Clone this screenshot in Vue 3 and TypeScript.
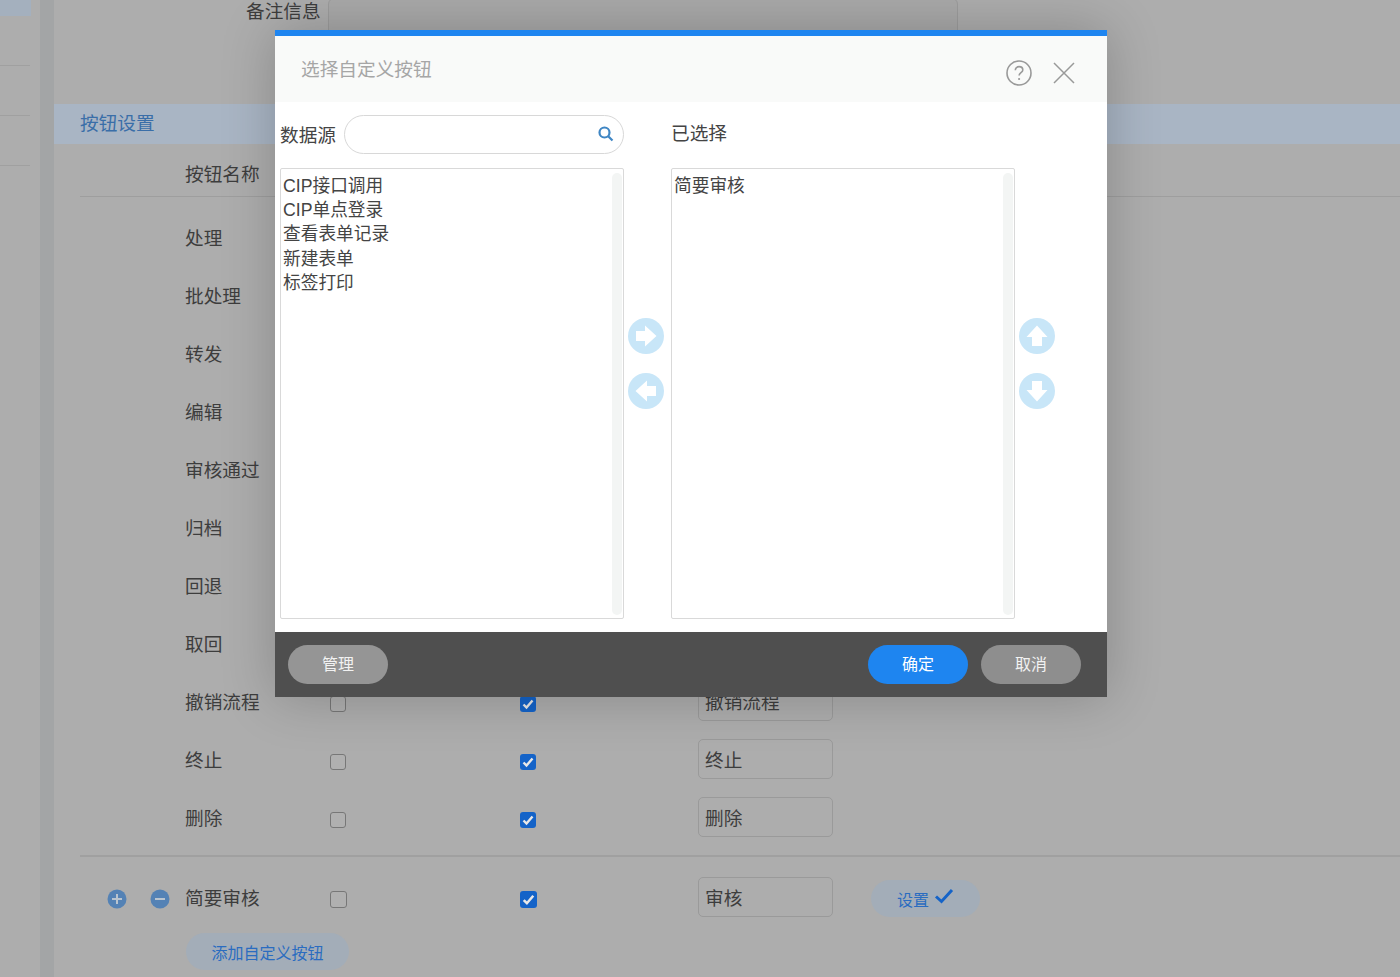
<template>
  <div class="page">
    <aside class="side">
      <div class="side-active"></div>
      <div class="side-item"></div>
      <div class="side-item"></div>
      <div class="side-item"></div>
    </aside>
    <div class="gutter"></div>

    <main class="main">
      <div class="remark">
        <label>备注信息</label>
        <div class="remark-input"></div>
      </div>

      <div class="section-bar">按钮设置</div>

      <div class="table">
        <div class="row head">
          <span></span>
          <span>按钮名称</span>
        </div>
        <div v-for="item in buttons" :key="item" class="row">
          <span></span>
          <span>{{ item }}</span>
          <span class="cb"></span>
          <span class="cb on"><svg viewBox="0 0 16 16"><path d="M3.5 8.500l3 3 6-7" /></svg></span>
          <span class="text-input">{{ item }}</span>
        </div>

        <div class="row custom">
          <span class="ops">
            <svg class="op" viewBox="0 0 20 20"><circle cx="10" cy="10" r="9.500" /><path d="M5 10h10M10 5v10" /></svg>
            <svg class="op" viewBox="0 0 20 20"><circle cx="10" cy="10" r="9.500" /><path d="M5 10h10" /></svg>
          </span>
          <span>简要审核</span>
          <span class="cb"></span>
          <span class="cb on"><svg viewBox="0 0 16 16"><path d="M3.5 8.500l3 3 6-7" /></svg></span>
          <span class="text-input">审核</span>
          <button class="pill setting">
            设置
            <svg class="tick" viewBox="0 0 20 16"><path d="M2 8.500l5.500 5L18 2" /></svg>
          </button>
        </div>
        <button class="pill add">添加自定义按钮</button>
      </div>
    </main>

    <div class="dialog">
      <header class="dialog-head">
        <span class="dialog-title">选择自定义按钮</span>
        <svg class="help" viewBox="0 0 26 26">
          <circle cx="13" cy="13" r="12" />
          <path d="M9.300 10.200c0-2.200 1.700-3.600 3.800-3.600s3.700 1.400 3.700 3.300c0 2.700-3.700 2.900-3.700 5.600" />
          <circle class="dot" cx="13.100" cy="19" r="1.100" />
        </svg>
        <svg class="close" viewBox="0 0 22 22"><path d="M1 1l20 20M21 1L1 21" /></svg>
      </header>

      <div class="dialog-body">
        <div class="search-row">
          <label>数据源</label>
          <div class="search">
            <svg viewBox="0 0 16 16"><circle cx="6.500" cy="6.500" r="5" /><path d="M10.200 10.200l4.300 4.300" /></svg>
          </div>
        </div>
        <div></div>
        <div class="selected-label">已选择</div>
        <div></div>

        <div class="list">
          <div v-for="s in source" :key="s">{{ s }}</div>
          <i class="track"></i>
        </div>
        <div class="arrows">
          <svg class="arrow"><use href="#round-arrow" /></svg>
          <svg class="arrow left"><use href="#round-arrow" /></svg>
        </div>
        <div class="list">
          <div>简要审核</div>
          <i class="track"></i>
        </div>
        <div class="arrows">
          <svg class="arrow up"><use href="#round-arrow" /></svg>
          <svg class="arrow down"><use href="#round-arrow" /></svg>
        </div>
      </div>

      <footer class="dialog-foot">
        <button class="foot-btn manage">管理</button>
        <span class="spacer"></span>
        <button class="foot-btn ok">确定</button>
        <button class="foot-btn cancel">取消</button>
      </footer>
    </div>

    <svg width="0" height="0" class="defs">
      <symbol id="round-arrow" viewBox="0 0 36 36">
        <circle cx="18" cy="18" r="18" fill="#c8e6f8" />
        <path d="M8 13h9V7.500L28.500 18 17 28.500V23H8z" fill="#fff" />
      </symbol>
    </svg>
  </div>
</template>

<script setup lang="ts">
const buttons: string[] = ['处理', '批处理', '转发', '编辑', '审核通过', '归档', '回退', '取回', '撤销流程', '终止', '删除']
const source: string[] = ['CIP接口调用', 'CIP单点登录', '查看表单记录', '新建表单', '标签打印']
</script>

<style>
html, body {
  margin: 0;
  background: #adadad;
}
</style>

<style scoped>
.page {
  position: relative;
  display: flex;
  height: 977px;
  overflow: hidden;
  background: #adadad;
  color: #3d3d3d;
  font-family: "Liberation Sans", "Noto Sans CJK SC", sans-serif;
  font-size: 18.67px;
}

.side {
  width: 40px;
  flex: none;
}
.side-active {
  width: 31px;
  height: 16px;
  background: #a4b0be;
}
.side-item {
  width: 30px;
  height: 49px;
  border-bottom: 1px solid #a0a0a0;
}
.gutter {
  width: 14px;
  flex: none;
  background: #a3a5a6;
}

.main {
  flex: 1;
  min-width: 0;
}
.remark {
  display: flex;
  gap: 7px;
  height: 104px;
  padding-left: 192px;
  box-sizing: border-box;
}
.remark label {
  line-height: 24px;
}
.remark-input {
  width: 628px;
  height: 60px;
  margin-top: -2px;
  border: 1px solid #9c9c9c;
  border-radius: 6px;
  background: #a9a9a9;
}
.section-bar {
  height: 40px;
  padding-left: 26px;
  line-height: 40px;
  background: #a9b5c4;
  color: #3a6ea8;
}

.table {
  margin-left: 26px;
}
.row {
  display: grid;
  grid-template-columns: 105px 145px 190px 178px 135px auto;
  justify-content: start;
  align-items: center;
  height: 58px;
}
.head {
  height: 53px;
  margin-bottom: 10px;
  padding-top: 4px;
  box-sizing: border-box;
  border-bottom: 1px solid #9e9e9e;
}
.custom {
  margin-top: 10px;
  padding-top: 10px;
  border-top: 2px solid #a0a0a0;
}

.cb {
  width: 16px;
  height: 16px;
  margin-top: 8px;
  box-sizing: border-box;
  border: 1.5px solid #777;
  border-radius: 3px;
  background: #b0b0b0;
}
.cb.on {
  border: none;
  background: #1463c8;
}
.cb svg {
  display: block;
  fill: none;
  stroke: #e8e8e8;
  stroke-width: 2.4;
}
.custom .cb {
  width: 17px;
  height: 17px;
  margin-top: 6px;
}
.text-input {
  height: 40px;
  margin-top: 2px;
  box-sizing: border-box;
  padding-left: 6px;
  border: 1px solid #9a9a9a;
  border-radius: 5px;
  line-height: 42px;
}
.custom .text-input {
  margin-top: 1px;
}

.ops {
  display: flex;
  gap: 23px;
  margin-top: 6px;
  padding-left: 27px;
}
.op {
  width: 20px;
  height: 20px;
}
.op circle {
  fill: #5482b5;
}
.op path {
  stroke: #b9c4cf;
  stroke-width: 2;
}

.pill {
  height: 37px;
  border: none;
  border-radius: 19px;
  background: #a3adb8;
  color: #2a6cc0;
  font: inherit;
  font-size: 16px;
}
.setting {
  display: flex;
  align-items: center;
  justify-content: center;
  gap: 5px;
  width: 109px;
  margin: 5px 0 0 38px;
  padding: 0;
}
.tick {
  width: 20px;
  height: 16px;
  margin-top: -5px;
  fill: none;
  stroke: #1463c8;
  stroke-width: 3;
}
.add {
  display: block;
  width: 163px;
  margin: 8px 0 0 106px;
  padding: 0;
}

.dialog {
  position: absolute;
  left: 275px;
  top: 30px;
  width: 832px;
  height: 667px;
  display: flex;
  flex-direction: column;
  background: #fff;
  border-top: 6px solid #1e85f0;
  box-sizing: border-box;
  box-shadow: 0 0 50px rgba(0, 0, 0, 0.22);
}
.dialog-head {
  display: flex;
  align-items: center;
  height: 66px;
  flex: none;
  padding: 0 32px 0 26px;
  background: #f9faf9;
}
.dialog-title {
  flex: 1;
  margin-top: -3px;
  color: #a6a6a6;
}
.help {
  width: 26px;
  height: 26px;
  margin: 7px 21px 0 0;
  fill: none;
  stroke: #999;
  stroke-width: 1.6;
}
.help .dot {
  fill: #999;
  stroke: none;
}
.close {
  width: 22px;
  height: 22px;
  margin-top: 7px;
  fill: none;
  stroke: #999;
  stroke-width: 1.5;
}

.dialog-body {
  flex: 1;
  display: grid;
  grid-template-columns: 344px 47px 344px 47px;
  grid-template-rows: 66px 451px;
  padding-left: 5px;
  color: #444;
}
.search-row {
  display: flex;
  align-items: center;
  gap: 8px;
  height: 39px;
  margin-top: 13px;
}
.search-row label {
  margin-top: -2px;
}
.search {
  flex: 1;
  display: flex;
  align-items: center;
  justify-content: flex-end;
  height: 39px;
  padding-right: 9px;
  box-sizing: border-box;
  border: 1px solid #d8d8d8;
  border-radius: 20px;
}
.search svg {
  width: 16px;
  height: 16px;
  margin-top: -1px;
  fill: none;
  stroke: #3f86c4;
  stroke-width: 2.2;
}
.selected-label {
  margin-top: 13px;
  line-height: 38px;
}

.list {
  position: relative;
  box-sizing: border-box;
  padding: 5px 2px;
  border: 1px solid #d9d9d9;
  border-radius: 2px;
  font-size: 17.7px;
  line-height: 24.2px;
}
.track {
  position: absolute;
  top: 4px;
  right: 1px;
  bottom: 3px;
  width: 10px;
  border-radius: 5px;
  background: #f3f5f4;
}
.arrows {
  display: flex;
  flex-direction: column;
  align-items: center;
  gap: 19px;
  padding: 150px 3px 0 0;
}
.arrow {
  width: 36px;
  height: 36px;
  flex: none;
}
.arrow.left { transform: rotate(180deg); }
.arrow.up { transform: rotate(-90deg); }
.arrow.down { transform: rotate(90deg); }
.defs {
  position: absolute;
}

.dialog-foot {
  display: flex;
  align-items: center;
  height: 65px;
  flex: none;
  padding: 0 26px 0 13px;
  background: #4f4f4f;
}
.spacer {
  flex: 1;
}
.foot-btn {
  width: 100px;
  height: 39px;
  padding: 0 0 4px;
  border: none;
  border-radius: 20px;
  color: #f2f2f2;
  font: inherit;
  font-size: 16px;
}
.manage {
  background: #959595;
}
.ok {
  margin-right: 13px;
  background: #1e85f0;
  color: #fff;
}
.cancel {
  background: #8e8e8e;
}
</style>
